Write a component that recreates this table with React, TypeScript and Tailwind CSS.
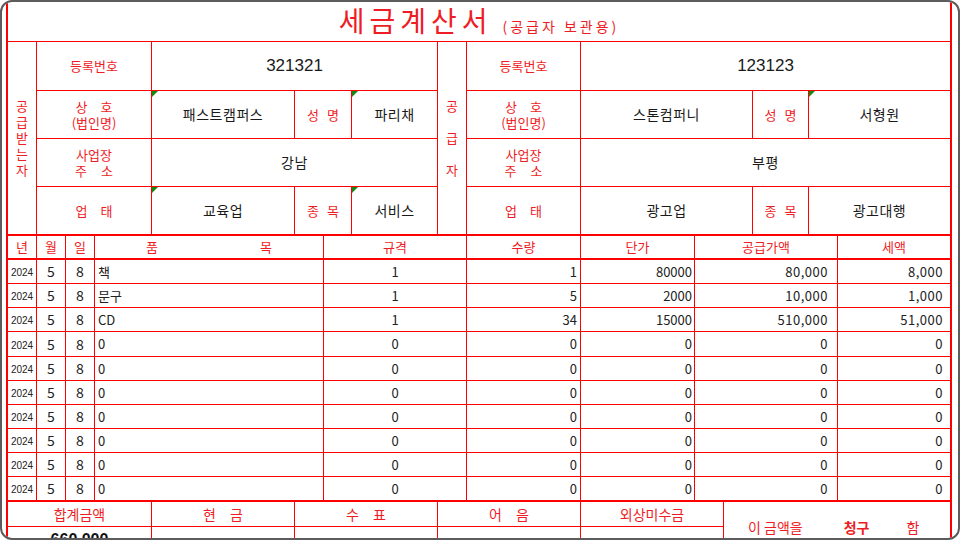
import React from 'react';

type Item = {
    name: string;
    spec: string;
    qty: string;
    price: string;
    supply: string;
    tax: string;
};

const items: Item[] = [
    { name: '책', spec: '1', qty: '1', price: '80000', supply: '80,000', tax: '8,000' },
    { name: '문구', spec: '1', qty: '5', price: '2000', supply: '10,000', tax: '1,000' },
    { name: 'CD', spec: '1', qty: '34', price: '15000', supply: '510,000', tax: '51,000' },
    { name: '0', spec: '0', qty: '0', price: '0', supply: '0', tax: '0' },
    { name: '0', spec: '0', qty: '0', price: '0', supply: '0', tax: '0' },
    { name: '0', spec: '0', qty: '0', price: '0', supply: '0', tax: '0' },
    { name: '0', spec: '0', qty: '0', price: '0', supply: '0', tax: '0' },
    { name: '0', spec: '0', qty: '0', price: '0', supply: '0', tax: '0' },
    { name: '0', spec: '0', qty: '0', price: '0', supply: '0', tax: '0' },
    { name: '0', spec: '0', qty: '0', price: '0', supply: '0', tax: '0' },
];

// row heights so the lines land where the sheet draws them
const rowHeights = [
    'h-[24px]', 'h-[24px]', 'h-[24px]', 'h-[25px]', 'h-[24px]',
    'h-[24px]', 'h-[24px]', 'h-[24px]', 'h-[24px]', 'h-[25px] border-b-2',
];

const KR = "font-['Noto_Sans_CJK_KR',sans-serif]";

// green marker Excel draws in the corner of a cell
const Flag = () => (
    <span className="absolute left-0 top-0 h-0 w-0 border-t-[6px] border-r-[6px] border-t-[#138a13] border-r-transparent" />
);

const Pair = ({ a, b, gap }: { a: string; b: string; gap: string }) => (
    <span className={`flex ${gap}`}>
        <span>{a}</span>
        <span>{b}</span>
    </span>
);

const Label: React.FC<{ className?: string; children: React.ReactNode }> = ({ className = '', children }) => (
    <div className={`flex flex-col items-center justify-center border-r border-b border-[#ff0000] text-[13px] leading-[16px] text-[#ee1c25] ${className}`}>
        {children}
    </div>
);

const Value: React.FC<{ className?: string; flag?: boolean; children: React.ReactNode }> = ({ className = '', flag, children }) => (
    <div className={`relative flex items-center justify-center border-b border-[#ff0000] text-[14px] tracking-[0.5px] text-[#1a1a1a] ${className}`}>
        {flag && <Flag />}
        {children}
    </div>
);

const PartyLabel = ({ chars }: { chars: string[] }) => (
    <div className="row-span-4 flex flex-col items-center justify-center border-r border-b-2 border-[#ff0000] text-[13px] leading-[16px] text-[#ee1c25]">
        {chars.map((c, i) => (
            <span key={i} className="h-[16px] leading-[16px]">{c}</span>
        ))}
    </div>
);

export default function App() {
    return (
        <div className={`h-[540px] w-[960px] bg-white ${KR}`}>
            <div className="h-full w-full overflow-hidden rounded-[12px] border-2 border-[#5c5c5c] bg-white pl-[4px] pr-[6px]">
                <div className="border-x-2 border-[#ff0000]">
                    {/* Title */}
                    <div className="flex h-[40px] items-baseline justify-center border-b border-[#ff0000] text-[#ee1c25]">
                        <span className="text-[28px] leading-[36px] tracking-[5px]">세금계산서</span>
                        <span className="ml-[10px] text-[14px] tracking-[3px]">(공급자 보관용)</span>
                    </div>

                    {/* Parties */}
                    <div className="grid grid-cols-[29px_115px_143px_57px_86px_29px_114px_172px_56px_141px] grid-rows-[49px_48px_48px_49px]">
                        <PartyLabel chars={['공', '급', '받', '는', '자']} />
                        <Label>등록번호</Label>
                        <Value className="col-span-3 border-r text-[17px] tracking-normal font-['Liberation_Sans',sans-serif]">321321</Value>
                        <PartyLabel chars={['공', '', '급', '', '자']} />
                        <Label>등록번호</Label>
                        <Value className="col-span-3 text-[17px] tracking-normal font-['Liberation_Sans',sans-serif]">123123</Value>

                        <Label>
                            <Pair a="상" b="호" gap="gap-[13px]" />
                            <span>(법인명)</span>
                        </Label>
                        <Value className="border-r" flag>패스트캠퍼스</Value>
                        <Label><Pair a="성" b="명" gap="gap-[8px]" /></Label>
                        <Value className="border-r" flag>파리채</Value>
                        <Label>
                            <Pair a="상" b="호" gap="gap-[13px]" />
                            <span>(법인명)</span>
                        </Label>
                        <Value className="border-r">스톤컴퍼니</Value>
                        <Label><Pair a="성" b="명" gap="gap-[8px]" /></Label>
                        <Value flag>서형원</Value>

                        <Label>
                            <span>사업장</span>
                            <Pair a="주" b="소" gap="gap-[14px]" />
                        </Label>
                        <Value className="col-span-3 border-r">강남</Value>
                        <Label>
                            <span>사업장</span>
                            <Pair a="주" b="소" gap="gap-[14px]" />
                        </Label>
                        <Value className="col-span-3">부평</Value>

                        <Label className="border-b-2"><Pair a="업" b="태" gap="gap-[13px]" /></Label>
                        <Value className="border-r border-b-2" flag>교육업</Value>
                        <Label className="border-b-2"><Pair a="종" b="목" gap="gap-[8px]" /></Label>
                        <Value className="border-r border-b-2" flag>서비스</Value>
                        <Label className="border-b-2"><Pair a="업" b="태" gap="gap-[13px]" /></Label>
                        <Value className="border-r border-b-2">광고업</Value>
                        <Label className="border-b-2"><Pair a="종" b="목" gap="gap-[8px]" /></Label>
                        <Value className="border-b-2">광고대행</Value>
                    </div>

                    {/* Items */}
                    <div className="grid h-[24px] grid-cols-[29px_29px_29px_229px_143px_114px_114px_143px_112px] border-b-2 border-[#ff0000] text-[13px] text-[#ee1c25]">
                        <div className="flex items-center justify-center border-r border-[#ff0000]">년</div>
                        <div className="flex items-center justify-center border-r border-[#ff0000]">월</div>
                        <div className="flex items-center justify-center border-r border-[#ff0000]">일</div>
                        <div className="flex items-center justify-around border-r border-[#ff0000]">
                            <span>품</span>
                            <span>목</span>
                        </div>
                        <div className="flex items-center justify-center border-r border-[#ff0000]">규격</div>
                        <div className="flex items-center justify-center border-r border-[#ff0000]">수량</div>
                        <div className="flex items-center justify-center border-r border-[#ff0000]">단가</div>
                        <div className="flex items-center justify-center border-r border-[#ff0000]">공급가액</div>
                        <div className="flex items-center justify-center">세액</div>
                    </div>
                    {items.map((it, i) => (
                        <div
                            key={i}
                            className={`grid grid-cols-[29px_29px_29px_229px_143px_114px_114px_143px_112px] border-b border-[#ff0000] text-[13px] text-[#222] ${rowHeights[i]}`}
                        >
                            <div className="flex items-center justify-center border-r border-[#ff0000] pt-[2px] text-[10px] font-['Liberation_Sans',sans-serif]">2024</div>
                            <div className="flex items-center justify-center border-r border-[#ff0000] text-[14px]">5</div>
                            <div className="flex items-center justify-center border-r border-[#ff0000] text-[14px]">8</div>
                            <div className="flex items-center border-r border-[#ff0000] pl-[3px]">{it.name}</div>
                            <div className="flex items-center justify-center border-r border-[#ff0000]">{it.spec}</div>
                            <div className="flex items-center justify-end border-r border-[#ff0000] pr-[3px]">{it.qty}</div>
                            <div className="flex items-center justify-end border-r border-[#ff0000] pr-[2px]">{it.price}</div>
                            <div className="flex items-center justify-end border-r border-[#ff0000] pr-[9px] tracking-[0.5px]">{it.supply}</div>
                            <div className="flex items-center justify-end pr-[7px] tracking-[0.5px]">{it.tax}</div>
                        </div>
                    ))}

                    {/* Totals */}
                    <div className="grid grid-cols-[144px_143px_143px_143px_143px_226px] grid-rows-[25px_25px] text-[14px] text-[#ee1c25]">
                        <div className="flex items-center justify-center border-r border-b border-[#ff0000]">합계금액</div>
                        <div className="flex items-center justify-center border-r border-b border-[#ff0000]"><Pair a="현" b="금" gap="gap-[14px]" /></div>
                        <div className="flex items-center justify-center border-r border-b border-[#ff0000]"><Pair a="수" b="표" gap="gap-[14px]" /></div>
                        <div className="flex items-center justify-center border-r border-b border-[#ff0000]"><Pair a="어" b="음" gap="gap-[14px]" /></div>
                        <div className="flex items-center justify-center border-r border-b border-[#ff0000]">외상미수금</div>
                        <div className="row-span-2 flex items-center pl-[24px]">
                            <span>이 금액을</span>
                            <span className="ml-[41px] font-bold">청구</span>
                            <span className="ml-[37px]">함</span>
                        </div>

                        <div className="flex items-center justify-center border-r border-[#ff0000] pt-[1px] text-[16px] font-bold text-[#111] font-['Liberation_Sans',sans-serif]">660,000</div>
                        <div className="border-r border-[#ff0000]" />
                        <div className="border-r border-[#ff0000]" />
                        <div className="border-r border-[#ff0000]" />
                        <div className="border-r border-[#ff0000]" />
                    </div>
                </div>
            </div>
        </div>
    );
}
